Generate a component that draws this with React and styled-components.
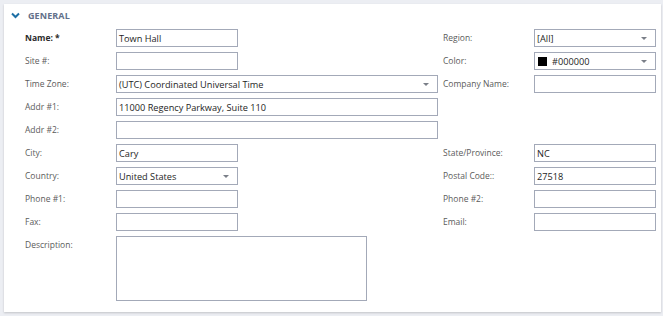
import React from 'react'
import styled, { createGlobalStyle } from 'styled-components'

const Global = createGlobalStyle`
  html, body { margin: 0; padding: 0; background: #eceef3; }
  body { font-family: "Open Sans", "Liberation Sans", sans-serif; }
`

const Page = styled.div`
  width: 663px;
  height: 316px;
  padding: 4px 2px 4px 4px;
  box-sizing: border-box;
`

const Panel = styled.section`
  background: #fff;
  height: 308px;
  box-sizing: border-box;
  box-shadow: 0 1px 2px rgba(0, 0, 0, 0.18);
  padding: 4px 0 0 21px;
`

const Header = styled.div`
  display: flex;
  align-items: center;
  gap: 8px;
  height: 14px;
  margin-left: -14px;
  margin-bottom: 7px;
  color: #62708a;
  font-size: 9px;
  font-weight: 700;
  letter-spacing: 0.1px;
`

const Grid = styled.div`
  display: grid;
  grid-template-columns: 91px 327px 91px 122px;
  row-gap: 5px;
  align-items: center;
`

const Label = styled.label`
  font-size: 8.5px;
  line-height: 18px;
  color: ${p => (p.$strong ? '#2b2b2b' : '#5b5b5b')};
  font-weight: ${p => (p.$strong ? 700 : 400)};
  align-self: ${p => (p.$top ? 'start' : 'center')};
  white-space: nowrap;
`

const Field = styled.div`
  position: relative;
  width: ${p => p.$w || 122}px;
  height: ${p => p.$h || 18}px;
  box-sizing: border-box;
  border: 1px solid #a3a9b8;
  background: #fff;
  display: flex;
  align-items: ${p => (p.$area ? 'flex-start' : 'center')};
  padding: 0 14px 0 2px;
  gap: 5px;
  font-size: 9.2px;
  color: #1e1e1e;
  white-space: nowrap;
  overflow: hidden;
`

const Caret = styled.span`
  position: absolute;
  right: 8px;
  top: 7px;
  width: 0;
  height: 0;
  border-left: 3px solid transparent;
  border-right: 3px solid transparent;
  border-top: 3px solid #7a7f88;
`

const Swatch = styled.span`
  width: 9px;
  height: 9px;
  margin-left: 1px;
  background: #000;
`

const Empty = styled.div``

const Chevron = () => (
  <svg width="9" height="7" viewBox="0 0 9 7">
    <path d="M1 1.5 L4.5 5 L8 1.5" fill="none" stroke="#1d6fa5" strokeWidth="2" />
  </svg>
)

const Input = ({ value, w, select, swatch }) => (
  <Field $w={w}>
    {swatch && <Swatch />}
    {value}
    {select && <Caret />}
  </Field>
)

export default function App() {
  return (
    <Page>
      <Global />
      <Panel>
        <Header>
          <Chevron />
          GENERAL
        </Header>
        <Grid>
          <Label $strong>Name: *</Label>
          <Input value="Town Hall" />
          <Label>Region:</Label>
          <Input value="[All]" select />

          <Label>Site #:</Label>
          <Input />
          <Label>Color:</Label>
          <Input value="#000000" select swatch />

          <Label>Time Zone:</Label>
          <Input value="(UTC) Coordinated Universal Time" w={322} select />
          <Label>Company Name:</Label>
          <Input />

          <Label>Addr #1:</Label>
          <Input value="11000 Regency Parkway, Suite 110" w={322} />
          <Empty />
          <Empty />

          <Label>Addr #2:</Label>
          <Input w={322} />
          <Empty />
          <Empty />

          <Label>City:</Label>
          <Input value="Cary" />
          <Label>State/Province:</Label>
          <Input value="NC" />

          <Label>Country:</Label>
          <Input value="United States" select />
          <Label>Postal Code::</Label>
          <Input value="27518" />

          <Label>Phone #1:</Label>
          <Input />
          <Label>Phone #2:</Label>
          <Input />

          <Label>Fax:</Label>
          <Input />
          <Label>Email:</Label>
          <Input />

          <Label $top>Description:</Label>
          <Field $w={251} $h={65} $area />
          <Empty />
          <Empty />
        </Grid>
      </Panel>
    </Page>
  )
}
